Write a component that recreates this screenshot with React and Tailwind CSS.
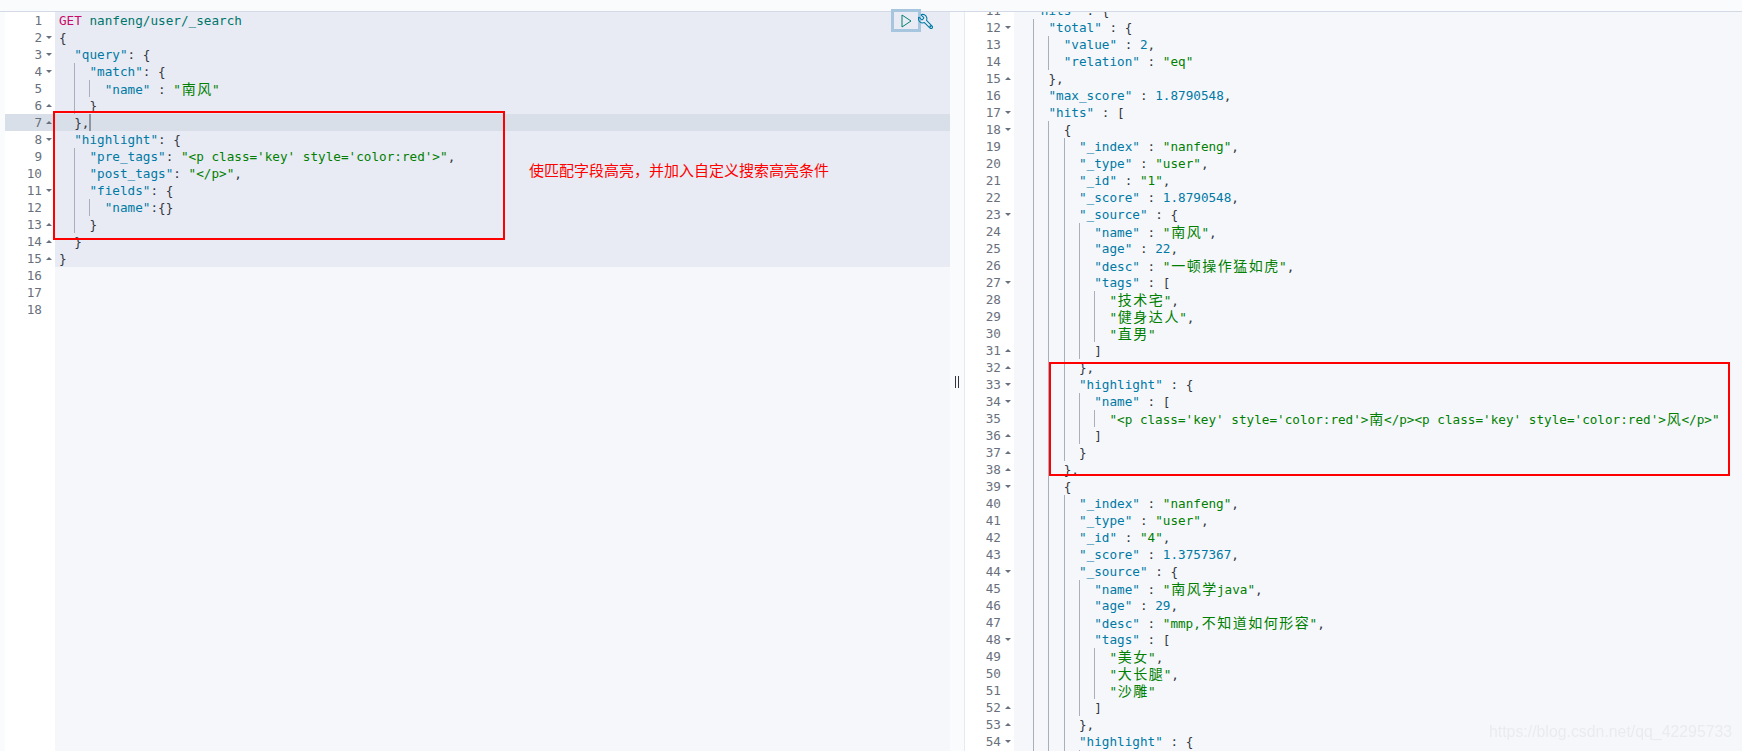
import React from 'react';

const requestLines = [
    'GET nanfeng/user/_search',
    '{',
    '  "query": {',
    '    "match": {',
    '      "name" : "南风"',
    '    }',
    '  },',
    '  "highlight": {',
    '    "pre_tags": "<p class=\'key\' style=\'color:red\'>",',
    '    "post_tags": "</p>",',
    '    "fields": {',
    '      "name":{}',
    '    }',
    '  }',
    '}',
    '',
    '',
    '',
];

const responseLines = [
    '  "hits" : {',
    '    "total" : {',
    '      "value" : 2,',
    '      "relation" : "eq"',
    '    },',
    '    "max_score" : 1.8790548,',
    '    "hits" : [',
    '      {',
    '        "_index" : "nanfeng",',
    '        "_type" : "user",',
    '        "_id" : "1",',
    '        "_score" : 1.8790548,',
    '        "_source" : {',
    '          "name" : "南风",',
    '          "age" : 22,',
    '          "desc" : "一顿操作猛如虎",',
    '          "tags" : [',
    '            "技术宅",',
    '            "健身达人",',
    '            "直男"',
    '          ]',
    '        },',
    '        "highlight" : {',
    '          "name" : [',
    '            "<p class=\'key\' style=\'color:red\'>南</p><p class=\'key\' style=\'color:red\'>风</p>"',
    '          ]',
    '        }',
    '      },',
    '      {',
    '        "_index" : "nanfeng",',
    '        "_type" : "user",',
    '        "_id" : "4",',
    '        "_score" : 1.3757367,',
    '        "_source" : {',
    '          "name" : "南风学java",',
    '          "age" : 29,',
    '          "desc" : "mmp,不知道如何形容",',
    '          "tags" : [',
    '            "美女",',
    '            "大长腿",',
    '            "沙雕"',
    '          ]',
    '        },',
    '        "highlight" : {',
    '          "name" : [',
];

const monoFont = "font-['DejaVu_Sans_Mono','Liberation_Mono',monospace]";

// CJK chars take two columns in the editor
function Text({ value }) {
    const parts = value.split(/([\u4e00-\u9fff])/);
    return parts.map((part, i) =>
        i % 2 === 1 ? (
            <span key={i} className="inline-block w-[2ch] text-center font-['Noto_Sans_CJK_SC',sans-serif] text-[14px] leading-[17px]">
                {part}
            </span>
        ) : (
            part
        )
    );
}

function tokenize(text) {
    const tokens = [];
    const re = /("[^"]*")(\s*:)?|(\d+(?:\.\d+)?)|([^"\d]+)/g;
    let m;
    while ((m = re.exec(text))) {
        if (m[1] && m[2]) {
            tokens.push({ value: m[1], color: 'text-[#0079a5]' });
            tokens.push({ value: m[2], color: 'text-[#343741]' });
        } else if (m[1]) {
            tokens.push({ value: m[1], color: 'text-[#017f01]' });
        } else if (m[3]) {
            tokens.push({ value: m[3], color: 'text-[#0079a5]' });
        } else {
            tokens.push({ value: m[4], color: 'text-[#343741]' });
        }
    }
    return tokens;
}

function CodeLine({ line }) {
    if (line.startsWith('GET ')) {
        return (
            <>
                <span className="text-[#c80a68]">GET</span> <span className="text-[#00756c]">{line.slice(4)}</span>
            </>
        );
    }
    const indent = line.length - line.trimStart().length;
    const guides = Math.floor(indent / 2);
    return (
        <>
            {Array.from({ length: guides }).map((_, i) => (
                <span
                    key={i}
                    className={i === 0 ? 'inline-block w-[2ch] h-[17px] align-top' : 'inline-block w-[2ch] h-[17px] align-top border-l border-[#a9afbf]'}
                />
            ))}
            {tokenize(line.trimStart()).map((t, i) => (
                <span key={i} className={t.color}>
                    <Text value={t.value} />
                </span>
            ))}
        </>
    );
}

function FoldArrow({ line }) {
    const t = line.trim();
    if (t.endsWith('{') || t.endsWith('[')) {
        return <span className="w-0 h-0 border-x-[3px] border-x-transparent border-t-[3px] border-t-[#69707d]" />;
    }
    if (t.startsWith('}') || t.startsWith(']')) {
        return <span className="w-0 h-0 border-x-[3px] border-x-transparent border-b-[3px] border-b-[#69707d]" />;
    }
    return null;
}

function Gutter({ lines, start, active, width }) {
    return (
        <div className={`${width} shrink-0 self-stretch bg-white text-[#69707d]`}>
            {lines.map((line, i) => (
                <div key={i} className={i + start === active ? 'flex h-[17px] justify-end bg-[#d9dfe8]' : 'flex h-[17px] justify-end'}>
                    <span>{i + start}</span>
                    <span className="flex w-[13px] items-center justify-center">
                        <FoldArrow line={line} />
                    </span>
                </div>
            ))}
        </div>
    );
}

function RunIcon() {
    return (
        <svg width="11" height="14" viewBox="0 0 11 14" fill="none">
            <path d="M1 1 L10 7 L1 13 Z" stroke="#017f72" strokeWidth="1" strokeLinejoin="round" />
        </svg>
    );
}

function WrenchIcon() {
    return (
        <svg width="17" height="17" viewBox="0 0 24 24" fill="none" stroke="#0079a5" strokeWidth="1.5">
            <g transform="translate(24 0) scale(-1 1)">
                <path d="M14.7 6.3a1 1 0 0 0 0 1.4l1.6 1.6a1 1 0 0 0 1.4 0l3.106-3.105c.32-.322.863-.22.983.218a6 6 0 0 1-8.259 7.057l-7.91 7.91a1 1 0 0 1-2.999-3l7.91-7.91a6 6 0 0 1 7.057-8.259c.438.12.54.662.219.984z" />
            </g>
            <circle cx="19" cy="19" r="0.8" />
        </svg>
    );
}

export default function App() {
    return (
        <div className={`relative flex h-screen w-full flex-col overflow-hidden bg-[#fafbfd] text-[12.66px] leading-[17px] ${monoFont}`}>
            <div className="h-[12px] shrink-0 border-b border-[#d3dae6]" />
            <div className="flex min-h-0 flex-1">
                <div className="flex w-[950px] shrink-0 pl-[5px]">
                    <Gutter lines={requestLines} start={1} active={7} width="w-[50px]" />
                    <div className="relative flex-1 self-stretch whitespace-pre bg-[#f5f7fb]">
                        {requestLines.map((line, i) => (
                            <div
                                key={i}
                                className={
                                    i === 6
                                        ? 'h-[17px] bg-[#d9dfe8] pl-[4px]'
                                        : i < 15
                                          ? 'h-[17px] bg-[#e8ebf3] pl-[4px]'
                                          : 'h-[17px] pl-[4px]'
                                }
                            >
                                <CodeLine line={line} />
                                {i === 6 && <span className="inline-block h-[17px] w-[2px] bg-[#8f95a3] align-top" />}
                            </div>
                        ))}
                        <div className="absolute left-[836px] top-[-3px] flex h-[23px] w-[30px] items-center justify-center border-[3px] border-[#a6c6e0]">
                            <RunIcon />
                        </div>
                        <div className="absolute left-[862px] top-[1px]">
                            <WrenchIcon />
                        </div>
                    </div>
                </div>
                <div className="flex w-[15px] shrink-0 items-center justify-center gap-[2px] border-r border-[#e6eaf2]">
                    <span className="h-[12px] w-px bg-[#343741]" />
                    <span className="h-[12px] w-px bg-[#343741]" />
                </div>
                <div className="flex min-w-0 flex-1 overflow-hidden bg-[#f5f7fb]">
                    <div className="-mt-[10px] flex min-w-0 flex-1 self-start">
                        <Gutter lines={responseLines} start={11} width="w-[49px]" />
                        <div className="flex-1 whitespace-pre">
                            {responseLines.map((line, i) => (
                                <div key={i} className="h-[17px] pl-[4px]">
                                    <CodeLine line={line} />
                                </div>
                            ))}
                        </div>
                    </div>
                </div>
            </div>

            {/* annotations on top of the screenshot */}
            <div className="absolute left-[53px] top-[111px] h-[129px] w-[452px] border-2 border-[#f00]" />
            <div className="absolute left-[1049px] top-[362px] h-[114px] w-[681px] border-2 border-[#f00]" />
            <div className="absolute left-[529px] top-[160px] font-['Noto_Sans_CJK_SC',sans-serif] text-[15px] leading-[20px] text-[#f00]">
                {'使匹配字段高亮\uFF0C并加入自定义搜索高亮条件'}
            </div>
            <div className="absolute left-[1489px] top-[722px] font-['Liberation_Sans',sans-serif] text-[15.85px] leading-[20px] text-[#e9ebef] blur-[0.5px]">
                https://blog.csdn.net/qq_42295733
            </div>
        </div>
    );
}
